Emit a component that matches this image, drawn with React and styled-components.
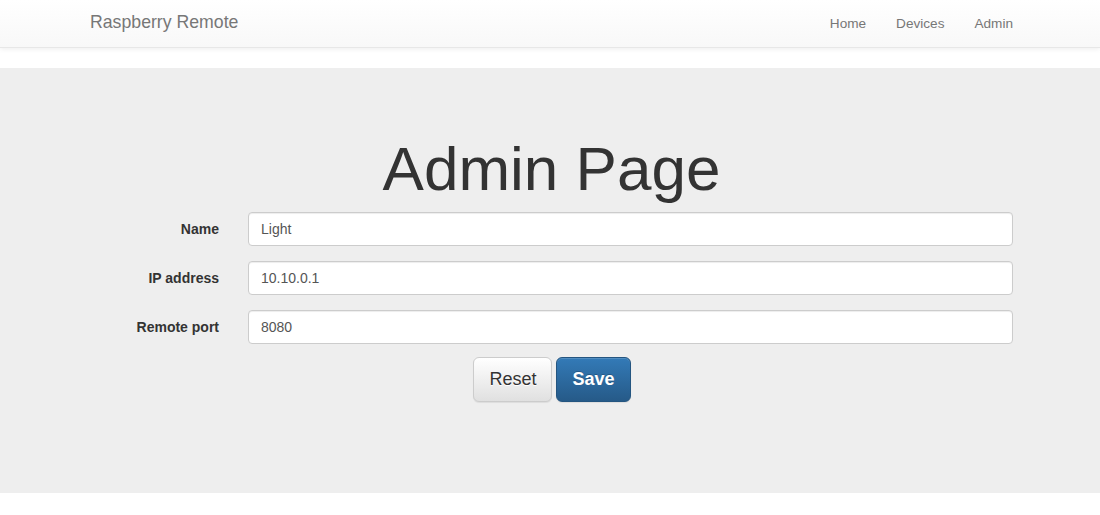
import React from "react";
import styled, { createGlobalStyle } from "styled-components";

const Global = createGlobalStyle`
  html, body { margin: 0; padding: 0; background: #fff; }
  body {
    font-family: "Liberation Sans", Arial, Helvetica, sans-serif;
    font-size: 14px;
    line-height: 1.42857;
    color: #333;
  }
  * { box-sizing: border-box; }
`;

const Navbar = styled.nav`
  height: 48px;
  margin-bottom: 20px;
  background-image: linear-gradient(to bottom, #ffffff 0%, #f8f8f8 100%);
  border-bottom: 1px solid #e7e7e7;
  box-shadow: inset 0 1px 0 rgba(255, 255, 255, 0.15), 0 1px 5px rgba(0, 0, 0, 0.075);
`;

const Container = styled.div`
  width: 956px;
  margin: 0 auto;
`;

const NavInner = styled(Container)`
  height: 100%;
  display: flex;
  align-items: center;
  justify-content: space-between;
`;

const Brand = styled.a`
  padding: 0 18px;
  font-size: 17.7px;
  line-height: 20px;
  color: #777;
  text-decoration: none;
  margin-top: -3px;
`;

const NavList = styled.div`
  display: flex;
  margin-top: 0;
`;

const NavLink = styled.a`
  padding: 0 15px;
  font-size: 13.6px;
  line-height: 20px;
  color: #777;
  text-decoration: none;
`;

const Jumbotron = styled.section`
  background: #eeeeee;
  padding: 48px 0 91px;
`;

const Title = styled.h1`
  margin: 18px 0 9px;
  padding-left: 3px;
  font-size: 62px;
  line-height: 69px;
  font-weight: 400;
  color: #333;
  text-align: center;
`;

const Form = styled.form`
  display: flex;
  flex-direction: column;
  gap: 15px;
  padding-right: 15px;
`;

const Group = styled.div`
  display: flex;
  align-items: center;
`;

const Label = styled.label`
  width: 147px;
  text-align: right;
  font-weight: 700;
  font-size: 14px;
  color: #333;
  padding-top: 1px;
`;

const Input = styled.input`
  flex: 1;
  margin-left: 29px;
  height: 34px;
  padding: 6px 12px;
  font-family: inherit;
  font-size: 14px;
  color: #555;
  background: #fff;
  border: 1px solid #ccc;
  border-radius: 4px;
  box-shadow: inset 0 1px 1px rgba(0, 0, 0, 0.075);
  outline: none;
`;

const Buttons = styled.div`
  display: flex;
  justify-content: center;
  gap: 4px;
  margin-top: -2px;
  padding-left: 19px;
`;

const Button = styled.button`
  height: 45px;
  padding: 10px 15px;
  font-family: inherit;
  font-size: 18px;
  line-height: 23px;
  border-radius: 6px;
  cursor: pointer;
  font-weight: ${(p) => (p.$primary ? 700 : 400)};
  color: ${(p) => (p.$primary ? "#fff" : "#333")};
  border: 1px solid ${(p) => (p.$primary ? "#245580" : "#ccc")};
  background-image: ${(p) =>
    p.$primary
      ? "linear-gradient(to bottom, #337ab7 0%, #265a88 100%)"
      : "linear-gradient(to bottom, #ffffff 0%, #e0e0e0 100%)"};
  text-shadow: ${(p) => (p.$primary ? "0 -1px 0 rgba(0,0,0,0.2)" : "0 1px 0 #fff")};
  box-shadow: inset 0 1px 0 rgba(255, 255, 255, 0.15), 0 1px 1px rgba(0, 0, 0, 0.075);
`;

const fields = [
  { label: "Name", value: "Light" },
  { label: "IP address", value: "10.10.0.1" },
  { label: "Remote port", value: "8080" },
];

export default function App() {
  return (
    <>
      <Global />
      <Navbar>
        <NavInner>
          <Brand href="#">Raspberry Remote</Brand>
          <NavList>
            <NavLink href="#">Home</NavLink>
            <NavLink href="#">Devices</NavLink>
            <NavLink href="#">Admin</NavLink>
          </NavList>
        </NavInner>
      </Navbar>
      <Jumbotron>
        <Container>
          <Title>Admin Page</Title>
          <Form onSubmit={(e) => e.preventDefault()}>
            {fields.map((f) => (
              <Group key={f.label}>
                <Label>{f.label}</Label>
                <Input defaultValue={f.value} />
              </Group>
            ))}
            <Buttons>
              <Button type="reset">Reset</Button>
              <Button type="submit" $primary>
                Save
              </Button>
            </Buttons>
          </Form>
        </Container>
      </Jumbotron>
    </>
  );
}
